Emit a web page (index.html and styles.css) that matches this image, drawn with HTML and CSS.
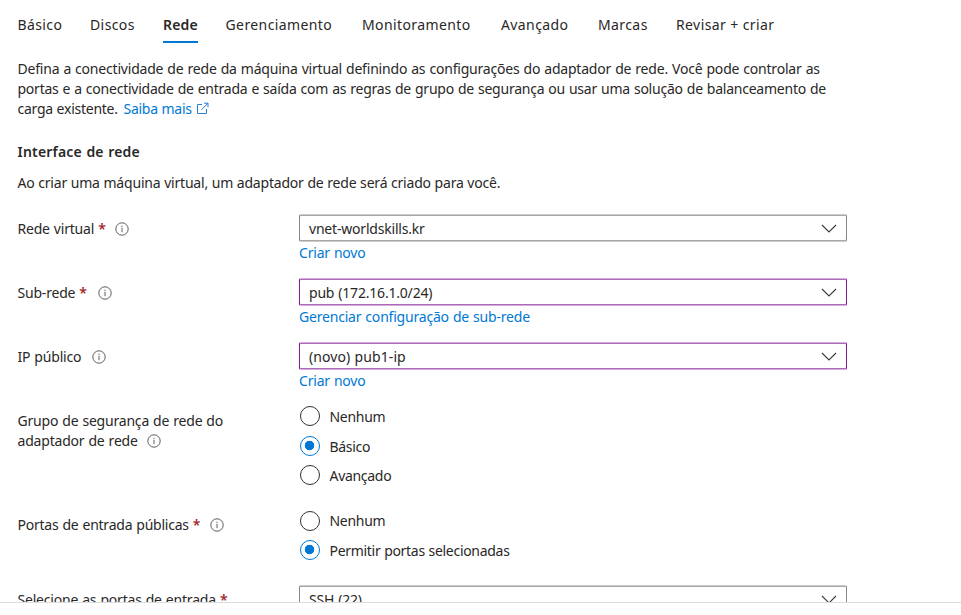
FILE: index.html
```html
<!DOCTYPE html>
<html lang="pt-BR">
<head>
<meta charset="utf-8">
<title>Criar uma máquina virtual</title>
<link rel="stylesheet" href="styles.css">
</head>
<body>
<svg width="0" height="0" class="defs" aria-hidden="true">
  <symbol id="info" viewBox="0 0 14 14"><circle cx="7" cy="7" r="6.2" fill="none" stroke="#605e5c"/><path d="M7 5.8v4.4" stroke="#605e5c"/><path d="M7 3.7v1.2" stroke="#605e5c"/></symbol>
  <symbol id="chevron" viewBox="0 0 16 9"><path d="M1 1l7 7 7-7" fill="none" stroke="#3b3a39" stroke-width="1.1"/></symbol>
</svg>
<main class="pane">
  <nav class="tabs">
    <a class="tab">Básico</a><a class="tab">Discos</a><a class="tab active">Rede</a><a class="tab">Gerenciamento</a><a class="tab">Monitoramento</a><a class="tab">Avançado</a><a class="tab">Marcas</a><a class="tab">Revisar + criar</a>
  </nav>
  <p class="intro">
    <span class="line">Defina a conectividade de rede da máquina virtual definindo as configurações do adaptador de rede. Você pode controlar as</span>
    <span class="line tight">portas e a conectividade de entrada e saída com as regras de grupo de segurança ou usar uma solução de balanceamento de</span>
    <span class="line last-line">carga existente. <a class="link more">Saiba mais</a><svg class="external" viewBox="0 0 13 13"><path d="M6 2.5H1.5v9h9V7M8 1.2h4v4M12 1.2L5.5 7.7" fill="none" stroke="#2b7cd9"/></svg></span>
  </p>
  <h2 class="heading">Interface de rede</h2>
  <p class="note">Ao criar uma máquina virtual, um adaptador de rede será criado para você.</p>

  <div class="row">
    <div class="label"><span>Rede virtual</span> <b class="req">*</b><svg class="info"><use href="#info"/></svg></div>
    <div class="field"><div class="select"><span>vnet-worldskills.kr</span><svg class="chevron"><use href="#chevron"/></svg></div><a class="link">Criar novo</a></div>
  </div>
  <div class="row">
    <div class="label"><span>Sub-rede</span> <b class="req">*</b><svg class="info far"><use href="#info"/></svg></div>
    <div class="field"><div class="select changed"><span>pub (172.16.1.0/24)</span><svg class="chevron"><use href="#chevron"/></svg></div><a class="link">Gerenciar configuração de sub-rede</a></div>
  </div>
  <div class="row">
    <div class="label"><span>IP público</span><svg class="info far"><use href="#info"/></svg></div>
    <div class="field"><div class="select changed"><span class="wide">(novo) pub1-ip</span><svg class="chevron"><use href="#chevron"/></svg></div><a class="link">Criar novo</a></div>
  </div>
  <div class="row group">
    <div class="label"><span>Grupo de segurança de rede do</span><br><span>adaptador de rede</span><svg class="info"><use href="#info"/></svg></div>
    <div class="field radios">
      <div class="radio"><i class="dot"></i><span>Nenhum</span></div>
      <div class="radio on"><i class="dot"></i><span>Básico</span></div>
      <div class="radio"><i class="dot"></i><span>Avançado</span></div>
    </div>
  </div>
  <div class="row ports">
    <div class="label"><span class="tight">Portas de entrada públicas</span> <b class="req">*</b><svg class="info"><use href="#info"/></svg></div>
    <div class="field radios">
      <div class="radio"><i class="dot"></i><span>Nenhum</span></div>
      <div class="radio on"><i class="dot"></i><span>Permitir portas selecionadas</span></div>
    </div>
  </div>
  <div class="row">
    <div class="label"><span>Selecione as portas de entrada</span> <b class="req">*</b></div>
    <div class="field"><div class="select"><span>SSH (22)</span><svg class="chevron"><use href="#chevron"/></svg></div></div>
  </div>
</main>
</body>
</html>
```
FILE: styles.css
```css
* { box-sizing: border-box; }
body { margin: 0; background: #fff; color: #292827; font: 14px/20px "Noto Sans", sans-serif; letter-spacing: -0.2px; word-spacing: 0.6px; }
.defs { position: absolute; }
.pane { height: 603px; overflow: hidden; border-bottom: 1px solid #dcdcdc; padding: 10px 18px 0 17.5px; }
.tabs { display: grid; grid-template-columns: 72.5px 73px 62.5px 136.5px 139px 97px 78px auto; justify-content: start; height: 34px; letter-spacing: 0.4px; word-spacing: 0; }
.tab { justify-self: start; line-height: 29px; height: 34px; white-space: nowrap; }
.tab.active { height: 33px; font-weight: 600; letter-spacing: 0.15px; border-bottom: 2px solid #0078d4; }
.intro { margin: 15px 0 0; }
.line { display: block; white-space: nowrap; }
.tight { letter-spacing: -0.235px; }
.last-line { letter-spacing: -0.25px; word-spacing: 0.3px; }
.link { color: #0078d4; }
.more { margin-left: 2px; }
.external { width: 13px; height: 13px; margin-left: 4px; vertical-align: -1px; }
.heading { margin: 23px 0 0; font-size: 14px; line-height: 20px; font-weight: 600; letter-spacing: 0.2px; }
.note { margin: 11px 0 22px; word-spacing: 0.3px; }
.row { display: grid; grid-template-columns: 281.5px 548px; height: 64px; }
.label { padding-top: 4px; white-space: nowrap; }
.req { color: #a4262c; font-weight: 600; }
.info { width: 14px; height: 14px; margin-left: 9.5px; vertical-align: -2px; }
.info.far { margin-left: 11px; }
.select { --edge: #8a8886; --mid: #a9a8a7; --soft: #cccbca; display: flex; align-items: center; justify-content: space-between; height: 28px; margin-top: -1px; border: 1px solid var(--edge); border-top-color: var(--soft); border-bottom-color: var(--soft); box-shadow: inset 0 1px var(--mid), inset 0 -1px var(--mid); border-radius: 2px; padding: 1px 9px 0; }
.select.changed { --edge: #881798; --mid: #ac68b9; --soft: #d2abd8; }
.wide { letter-spacing: 0.08px; }
.chevron { width: 16px; height: 9px; }
.field .link { display: block; width: max-content; margin-top: 1px; }
.group { height: 104px; }
.radios { margin-top: -1px; letter-spacing: -0.3px; word-spacing: 0.4px; }
.radio { display: flex; align-items: center; gap: 9.5px; height: 20px; margin: 0 0 9.5px 1px; }
.radio span { padding-top: 1px; }
.dot { width: 20px; height: 20px; border: 1px solid #323130; border-radius: 50%; }
.on .dot { border-color: #0078d4; background: radial-gradient(circle at 8.5px 8.5px, #0078d4 4.4px, transparent 5.1px); }
.ports { height: 75px; }
.ports .radios { margin-top: -0.5px; }
.ports .radio { margin-bottom: 9px; }
.radio.on span { padding-top: 2px; }
```
